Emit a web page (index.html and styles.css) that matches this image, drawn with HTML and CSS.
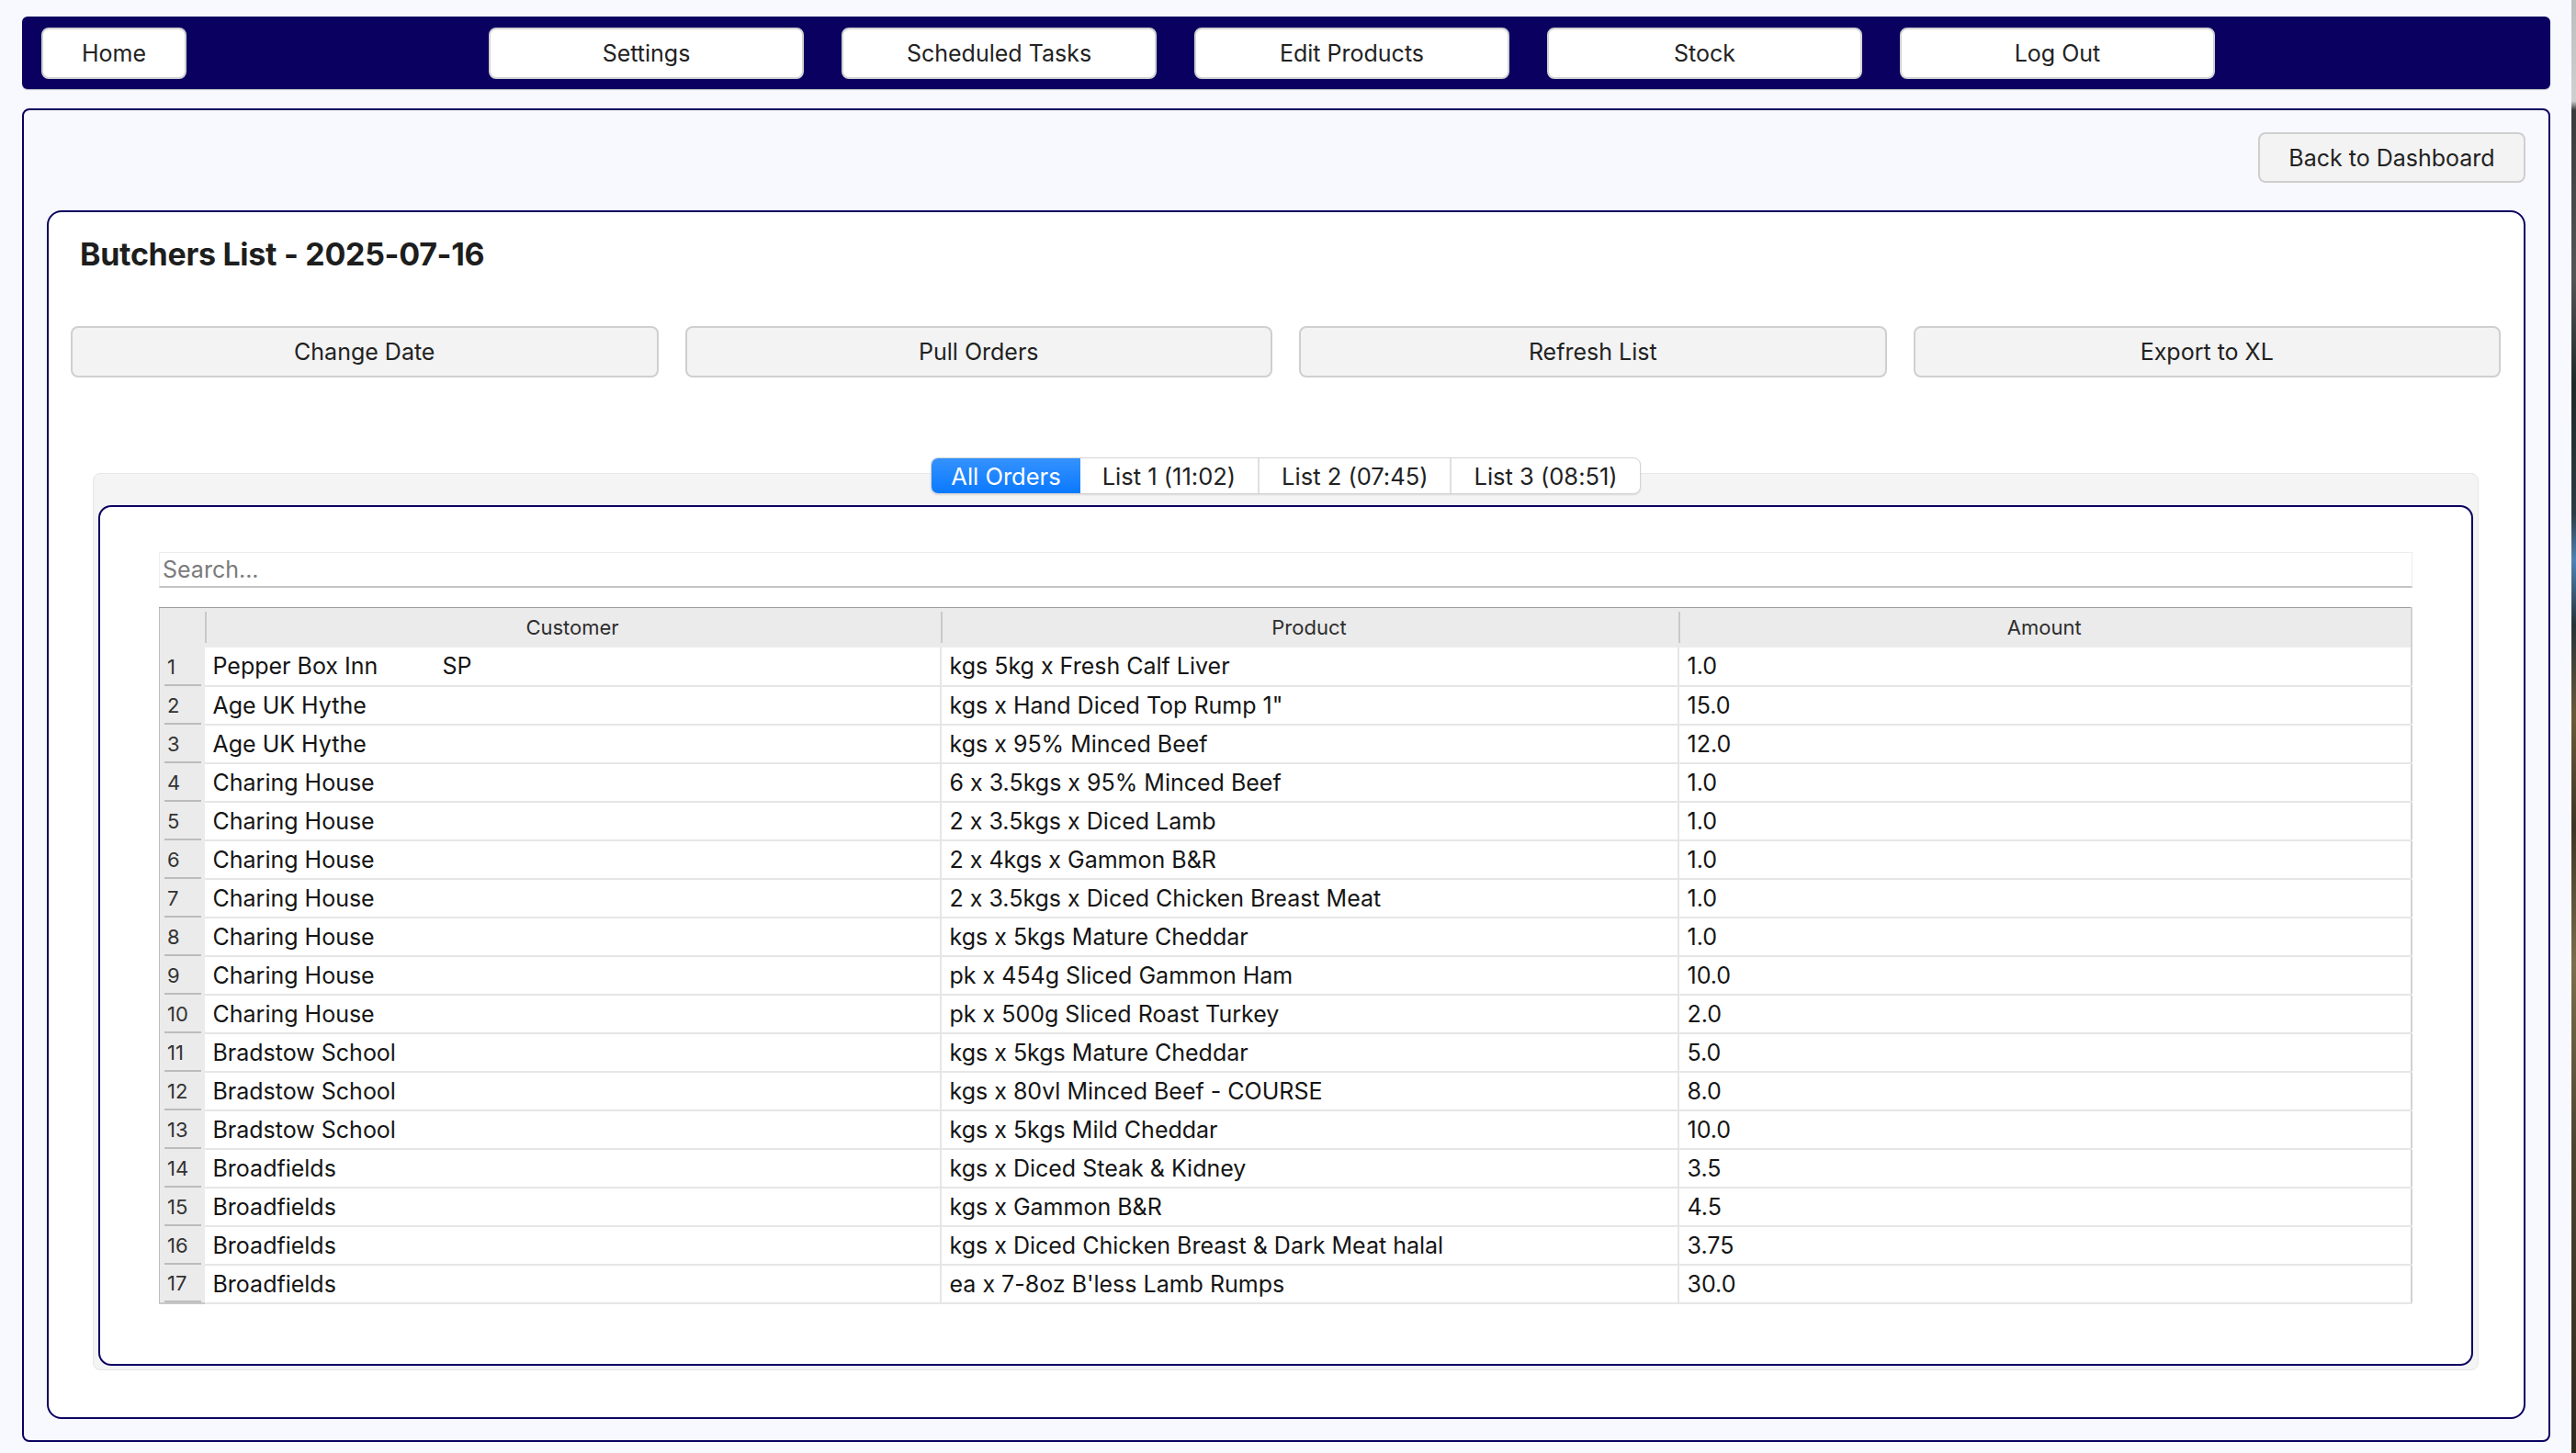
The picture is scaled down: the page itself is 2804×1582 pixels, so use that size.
FILE: index.html
```html
<!DOCTYPE html>
<html lang="en">
<head>
<meta charset="utf-8">
<title>Butchers List</title>
<link rel="stylesheet" href="styles.css">
</head>
<body>
<div class="window">
  <nav class="topbar">
    <button class="nav-btn nav-home">Home</button>
    <button class="nav-btn">Settings</button>
    <button class="nav-btn">Scheduled Tasks</button>
    <button class="nav-btn">Edit Products</button>
    <button class="nav-btn">Stock</button>
    <button class="nav-btn">Log Out</button>
  </nav>

  <main class="outer">
    <div class="back-row">
      <button class="btn back-btn">Back to Dashboard</button>
    </div>

    <section class="card">
      <h1 class="title">Butchers List - 2025-07-16</h1>

      <div class="actions">
        <button class="btn action-btn">Change Date</button>
        <button class="btn action-btn">Pull Orders</button>
        <button class="btn action-btn">Refresh List</button>
        <button class="btn action-btn">Export to XL</button>
      </div>

      <div class="tabwidget">
        <div class="tabs">
          <div class="tab active">All Orders</div>
          <div class="tab">List 1 (11:02)</div>
          <div class="tab">List 2 (07:45)</div>
          <div class="tab">List 3 (08:51)</div>
        </div>
        <div class="pane">
          <div class="frame">
            <input class="search" type="text" placeholder="Search...">
            <table class="grid">
              <colgroup>
                <col class="c-num"><col class="c-cust"><col class="c-prod"><col class="c-amt">
              </colgroup>
              <thead>
                <tr><th class="corner"></th><th>Customer</th><th>Product</th><th>Amount</th></tr>
              </thead>
              <tbody>
                <tr><td class="num">1</td><td class="pre">Pepper Box Inn          SP</td><td>kgs 5kg x Fresh Calf Liver</td><td>1.0</td></tr>
                <tr><td class="num">2</td><td>Age UK Hythe</td><td>kgs x Hand Diced Top Rump 1"</td><td>15.0</td></tr>
                <tr><td class="num">3</td><td>Age UK Hythe</td><td>kgs x 95% Minced Beef</td><td>12.0</td></tr>
                <tr><td class="num">4</td><td>Charing House</td><td>6 x 3.5kgs x 95% Minced Beef</td><td>1.0</td></tr>
                <tr><td class="num">5</td><td>Charing House</td><td>2 x 3.5kgs x Diced Lamb</td><td>1.0</td></tr>
                <tr><td class="num">6</td><td>Charing House</td><td>2 x 4kgs x Gammon B&amp;R</td><td>1.0</td></tr>
                <tr><td class="num">7</td><td>Charing House</td><td>2 x 3.5kgs x Diced Chicken Breast Meat</td><td>1.0</td></tr>
                <tr><td class="num">8</td><td>Charing House</td><td>kgs x 5kgs Mature Cheddar</td><td>1.0</td></tr>
                <tr><td class="num">9</td><td>Charing House</td><td>pk x 454g Sliced Gammon Ham</td><td>10.0</td></tr>
                <tr><td class="num">10</td><td>Charing House</td><td>pk x 500g Sliced Roast Turkey</td><td>2.0</td></tr>
                <tr><td class="num">11</td><td>Bradstow School</td><td>kgs x 5kgs Mature Cheddar</td><td>5.0</td></tr>
                <tr><td class="num">12</td><td>Bradstow School</td><td>kgs x 80vl Minced Beef - COURSE</td><td>8.0</td></tr>
                <tr><td class="num">13</td><td>Bradstow School</td><td>kgs x 5kgs Mild Cheddar</td><td>10.0</td></tr>
                <tr><td class="num">14</td><td>Broadfields</td><td>kgs x Diced Steak &amp; Kidney</td><td>3.5</td></tr>
                <tr><td class="num">15</td><td>Broadfields</td><td>kgs x Gammon B&amp;R</td><td>4.5</td></tr>
                <tr><td class="num">16</td><td>Broadfields</td><td>kgs x Diced Chicken Breast &amp; Dark Meat halal</td><td>3.75</td></tr>
                <tr><td class="num">17</td><td>Broadfields</td><td>ea x 7-8oz B'less Lamb Rumps</td><td>30.0</td></tr>
              </tbody>
            </table>
          </div>
        </div>
      </div>
    </section>
  </main>
</div>
<div class="desk-edge"></div>
</body>
</html>
```

FILE: styles.css
```css
* { box-sizing: border-box; }

html, body {
  margin: 0;
  height: 1582px;
  overflow: hidden;
}

body {
  display: flex;
  font-family: "Inter", "Noto Sans", sans-serif;
  font-feature-settings: "calt" 0;
  color: #1c1c1c;
  background: #f8f8ff;
}

button, input { font-feature-settings: "calt" 0; }

.window {
  flex: 1;
  background: #f8f8ff;
  padding: 18px 23px 12px 24px;
}

.desk-edge {
  width: 5px;
  background: linear-gradient(#bdbdbd 0, #cfcfcf 110px, #3a3a3a 120px, #555 300px, #1e2a28 420px, #2d3c44 560px, #4f84b6 610px, #273238 680px, #6a5a3a 780px, #3d3524 900px, #7a6e4c 1050px, #4b4430 1250px, #2e2a1e 1582px);
}

/* ---------- top navigation ---------- */
.topbar {
  height: 79px;
  background: #0a0060;
  border-radius: 6px;
  display: flex;
  align-items: center;
  gap: 41px;
  padding-left: 21px;
  box-shadow: 0 1px 1px rgba(0, 0, 0, 0.25);
}

.nav-btn {
  height: 56px;
  width: 343px;
  background: #ffffff;
  border: 2px solid #d2d2d2;
  border-radius: 8px;
  font-family: inherit;
  font-size: 25px;
  color: #222;
  padding: 0;
}

.nav-home {
  width: 158px;
  margin-right: 288px;
}

/* ---------- outer frame ---------- */
.outer {
  margin-top: 21px;
  height: 1452px;
  border: 2px solid #0a0060;
  border-radius: 8px;
  padding: 24px 25px 23px 25px;
  background: #f8f8ff;
}

.back-row {
  display: flex;
  justify-content: flex-end;
}

.btn {
  background: #f3f3f3;
  border: 2px solid #cfcfcf;
  border-radius: 8px;
  font-family: inherit;
  font-size: 25px;
  color: #222;
  padding: 0;
}

.back-btn {
  width: 291px;
  height: 55px;
}

/* ---------- card ---------- */
.card {
  margin-top: 30px;
  background: #ffffff;
  border: 2px solid #0a0060;
  border-radius: 16px;
  padding: 25px 25px 51px 24px;
}

.title {
  margin: 0 0 57px 10px;
  font-size: 34px;
  line-height: 42px;
  font-weight: 700;
  letter-spacing: -0.3px;
  color: #1e1e1e;
}

.actions {
  display: grid;
  grid-template-columns: repeat(4, 1fr);
  gap: 29px;
}

.action-btn {
  height: 56px;
}

/* ---------- tab widget ---------- */
.tabwidget {
  margin: 87px 24px 0 24px;
  display: flex;
  flex-direction: column;
  align-items: center;
}

.tabs {
  position: relative;
  z-index: 1;
  display: flex;
  height: 40px;
  margin-bottom: -23px;
  background: #ffffff;
  border: 1px solid #d4d4d4;
  border-radius: 8px;
  overflow: hidden;
  box-shadow: 0 1px 2px rgba(0, 0, 0, 0.12);
}

.tab {
  display: flex;
  align-items: center;
  padding: 0 24px;
  font-size: 25.5px;
  color: #222;
  border-left: 2px solid #e0e0e0;
}

.tab:first-child { border-left: none; }
.tab.active + .tab { border-left: none; }

.tab.active {
  color: #ffffff;
  background: linear-gradient(#3592ff, #0a79ff);
  padding: 0 21px;
}

.pane {
  align-self: stretch;
  background: #f4f4f4;
  border: 1px solid #e7e7e7;
  border-radius: 8px;
  padding: 34px 5px 4px 5px;
}

.frame {
  background: #ffffff;
  border: 2px solid #0a0060;
  border-radius: 14px;
  padding: 49px 64px 65px 64px;
}

.search {
  display: block;
  width: 100%;
  height: 39px;
  border: 1px solid #ededed;
  border-bottom: 2px solid #c4c4c4;
  padding: 0 3px;
  font-family: inherit;
  font-size: 25px;
  color: #222;
  background: #fff;
  outline: none;
}

.search::placeholder { color: #7b7b7b; }

/* ---------- table ---------- */
.grid {
  margin-top: 21px;
  width: 100%;
  table-layout: fixed;
  border-collapse: collapse;
  border-top: 1px solid #9c9c9c;
  border-left: 1px solid #bcbcbc;
  border-right: 2px solid #d2d2d2;
  border-bottom: 2px solid #c8c8c8;
}

.c-num { width: 49px; }
.c-cust { width: 801px; }
.c-prod { width: 803px; }

.grid th {
  height: 43px;
  background: #ebebeb linear-gradient(#c9c9c9, #c9c9c9) no-repeat left center / 2px 34px;
  font-weight: 400;
  font-size: 22px;
  color: #2e2e2e;
  text-align: center;
  padding: 0;
}

.grid th.corner { background: #ebebeb; }

.grid td {
  height: 42px;
  padding: 0 0 0 9px;
  font-size: 25px;
  color: #151515;
  border-bottom: 2px solid #e6e6e6;
  border-left: 2px solid #e6e6e6;
  white-space: nowrap;
  overflow: hidden;
}

.grid td.pre { white-space: pre; }

.grid td.num {
  padding-left: 8px;
  font-size: 22px;
  color: #333;
  border-left: none;
  border-bottom: none;
  background: #ebebeb linear-gradient(#bcbcbc, #bcbcbc) no-repeat 5px bottom / 40px 2px;
}

.grid td.num + td { border-left: none; }
```
